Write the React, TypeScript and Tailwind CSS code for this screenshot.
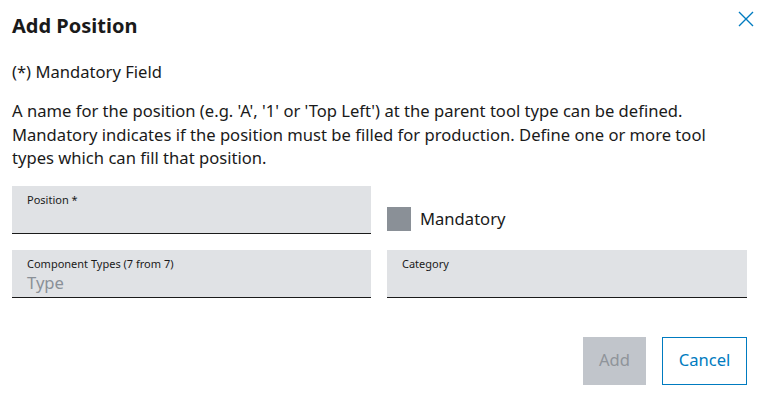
export default function App() {
  return (
    <div
      className="h-[396px] w-[764px] bg-white text-[#1a1a1a]"
      style={{ fontFamily: '"Noto Sans", "Open Sans", sans-serif' }}
    >
      <div className="flex w-[747px] flex-col pl-3 pt-[12px]">
        <div className="flex items-start justify-between">
          <h1 className="text-[20px] font-bold leading-7">Add Position</h1>
          <button className="-mr-[11px] -mt-[5px] flex h-6 w-6 items-center justify-center text-[#007bc0]">
            <svg width="16" height="16" viewBox="0 0 16 16" fill="none" stroke="currentColor" strokeWidth="1.4">
              <path d="M1 1 L15 15 M15 1 L1 15" />
            </svg>
          </button>
        </div>
        <p className="mt-[20px] text-[16.6px] leading-6">(*) Mandatory Field</p>
        <p className="mt-[15px] text-[16.6px] leading-[23.5px]">
          A name for the position (e.g. 'A', '1' or 'Top Left') at the parent tool type can be defined.
          <br />
          Mandatory indicates if the position must be filled for production. Define one or more tool
          <br />
          types which can fill that position.
        </p>
        <div className="mt-[16px] grid grid-cols-[359px_360px] gap-x-4 gap-y-4">
          <div className="h-12 border-b border-[#1a1a1a] bg-[#e0e2e5] px-[15px] pt-[6px]">
            <div className="text-[11px] leading-4">Position *</div>
          </div>
          <label className="flex items-center gap-[9px] pt-[19px]">
            <span className="h-6 w-6 bg-[#8a9097]" />
            <span className="text-[16.6px]">Mandatory</span>
          </label>
          <div className="h-12 border-b border-[#1a1a1a] bg-[#e0e2e5] px-[15px] pt-[6px]">
            <div className="text-[11px] leading-4">Component Types (7 from 7)</div>
            <div className="text-[16.6px] leading-[22px] text-[#8a9097]">Type</div>
          </div>
          <div className="h-12 border-b border-[#1a1a1a] bg-[#e0e2e5] px-[15px] pt-[6px]">
            <div className="text-[11px] leading-4">Category</div>
          </div>
        </div>
        <div className="mt-[39px] flex justify-end gap-4">
          <button className="h-12 w-[63px] bg-[#c1c5cb] text-[16.6px] text-[#8f949a]">Add</button>
          <button className="h-12 w-[85px] border border-[#007bc0] text-[16.6px] text-[#007bc0]">
            Cancel
          </button>
        </div>
      </div>
    </div>
  )
}
